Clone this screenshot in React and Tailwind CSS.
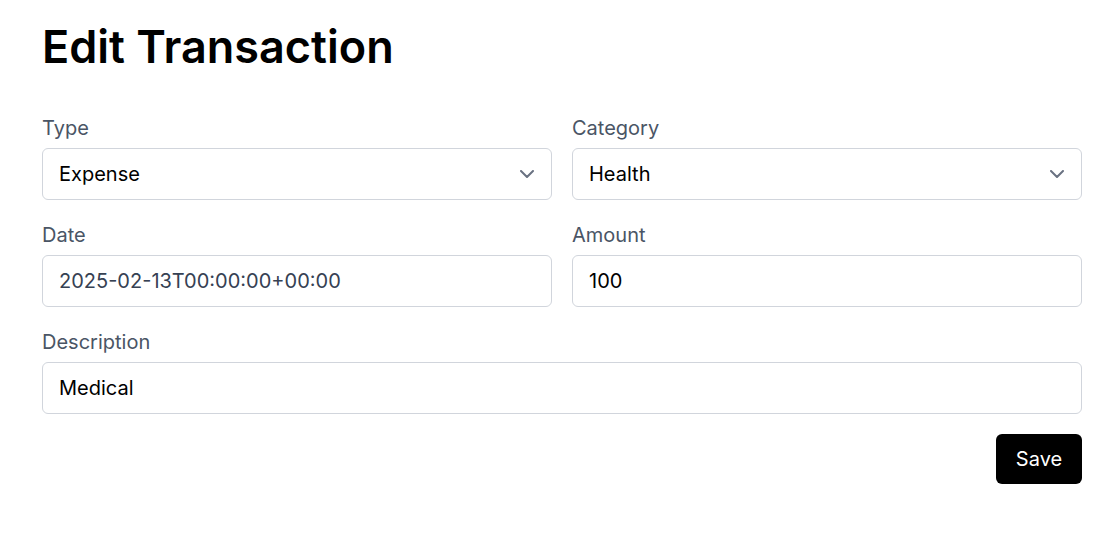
import React from "react";

function ChevronDown() {
  return (
    <svg viewBox="0 0 14 8" className="w-[14px] h-[8px] text-gray-500" fill="none" stroke="currentColor" strokeWidth="2" strokeLinecap="round" strokeLinejoin="round">
      <path d="M1 1l6 6 6-6" />
    </svg>
  );
}

function Field({ label, children, className = "" }) {
  return (
    <div className={"flex flex-col " + className}>
      <label className="text-[20px] leading-[28px] text-gray-600 mb-[6px]">{label}</label>
      {children}
    </div>
  );
}

function SelectBox({ value }) {
  return (
    <div className="h-[52px] border border-gray-300 rounded-md bg-white flex items-center justify-between pl-4 pr-[17px] text-[20px] text-black">
      <span>{value}</span>
      <ChevronDown />
    </div>
  );
}

function InputBox({ value, muted }) {
  return (
    <div className={"h-[52px] border border-gray-300 rounded-md bg-white flex items-center px-4 text-[20px] " + (muted ? "text-gray-700" : "text-black")}>
      {value}
    </div>
  );
}

export default function App() {
  return (
    <div className="min-h-screen bg-white pl-[42px] pr-[25px] pt-[18px]" style={{ fontFamily: "Inter, sans-serif" }}>
      <h1 className="text-[45px] leading-[58px] font-semibold text-black">Edit Transaction</h1>
      <div className="mt-[38px] grid grid-cols-2 gap-x-5 gap-y-[21px]">
        <Field label="Type">
          <SelectBox value="Expense" />
        </Field>
        <Field label="Category">
          <SelectBox value="Health" />
        </Field>
        <Field label="Date">
          <InputBox value="2025-02-13T00:00:00+00:00" muted />
        </Field>
        <Field label="Amount">
          <InputBox value="100" />
        </Field>
        <Field label="Description" className="col-span-2">
          <InputBox value="Medical" />
        </Field>
      </div>
      <div className="flex justify-end mt-5">
        <button className="h-[50px] w-[86px] bg-black text-white rounded-md text-[20px]">Save</button>
      </div>
    </div>
  );
}
